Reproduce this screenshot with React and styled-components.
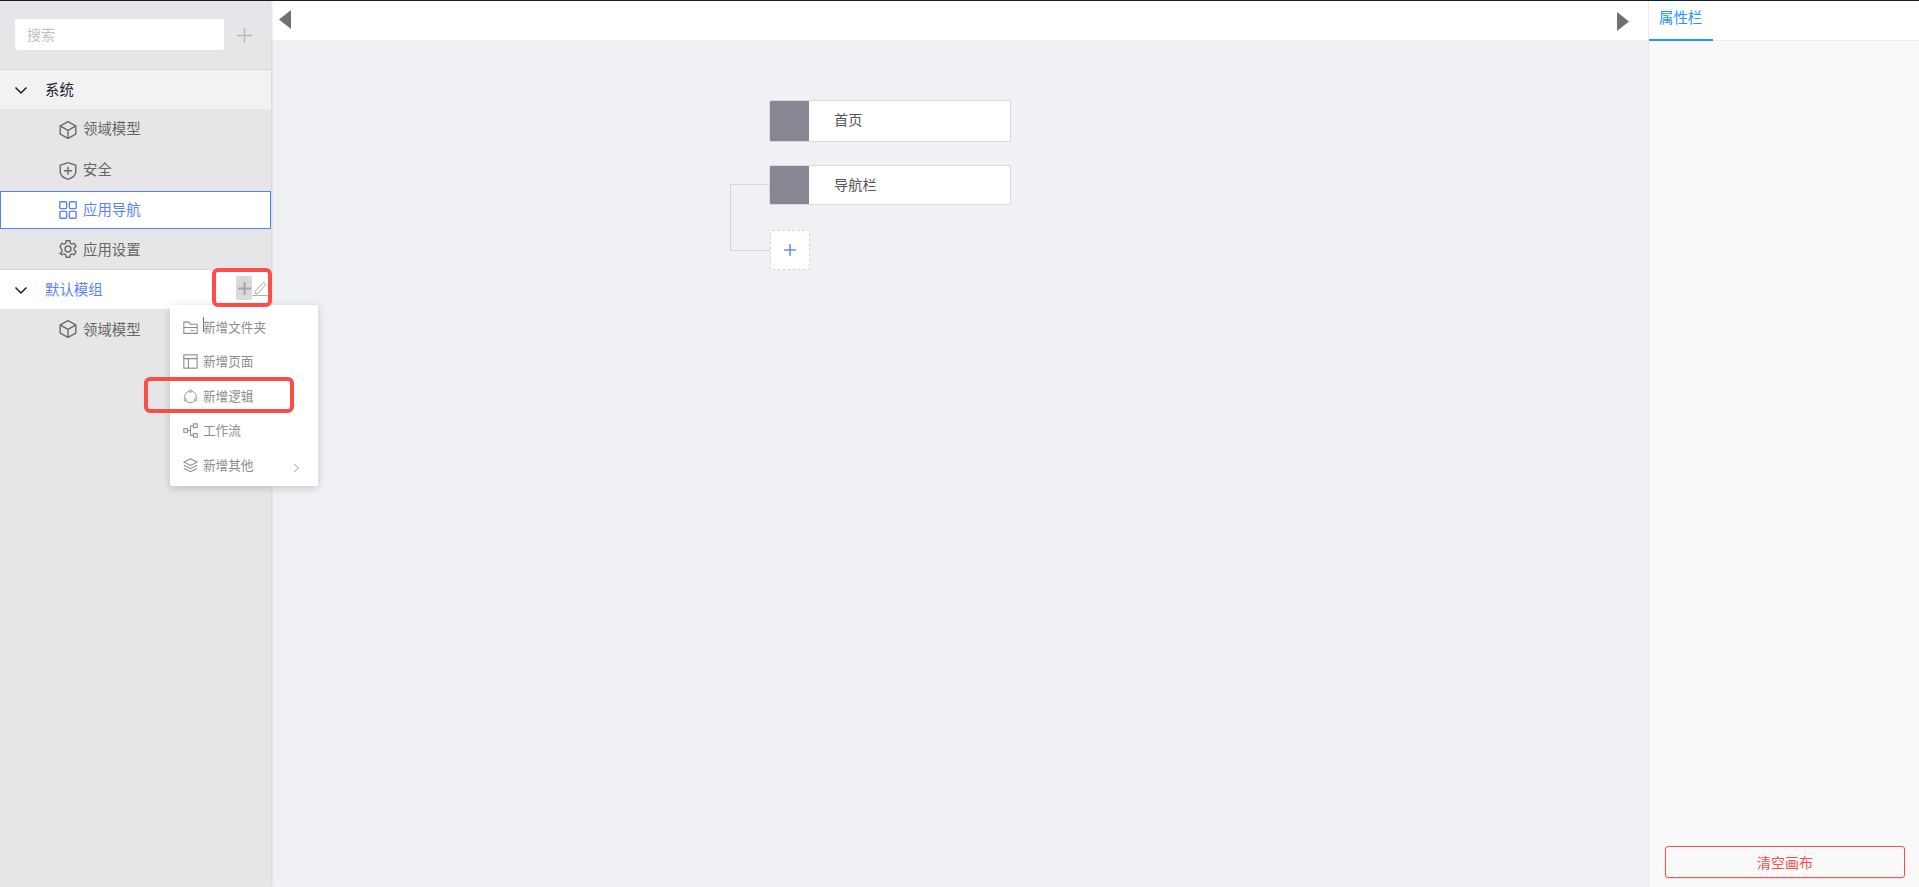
import React from 'react';
import styled, { createGlobalStyle } from 'styled-components';

const GlobalStyle = createGlobalStyle`
  html, body {
    margin: 0;
    padding: 0;
    height: 100%;
    overflow: hidden;
  }
  body {
    font-family: "Noto Sans CJK SC", "Liberation Sans", sans-serif;
    font-size: 14px;
  }
  * {
    box-sizing: border-box;
  }
`;

const Page = styled('div')`
  width: 1919px;
  height: 887px;
  display: flex;
  flex-direction: column;
  position: relative;
  background-color: #f0f1f5;
`;

const TopLine = styled('div')`
  height: 1px;
  flex: none;
  background-color: #0b2136;
`;

const Main = styled('div')`
  flex: 1;
  display: flex;
  min-height: 0;
`;

const Sidebar = styled('div')`
  width: 271px;
  flex: none;
  background-color: #e6e6e8;
  box-shadow: 1px 0 2px rgba(0, 0, 0, 0.12);
  position: relative;
  z-index: 2;
`;

const SearchBar = styled('div')`
  height: 69px;
  padding: 18px 0 0 15px;
  display: flex;
  align-items: flex-start;
  border-bottom: 1px solid #d6d6d8;
`;

const SearchInput = styled('div')`
  width: 209px;
  height: 31px;
  background-color: #fff;
  border-radius: 2px;
  color: #bfbfbf;
  font-size: 14px;
  line-height: 31px;
  padding-left: 12px;
`;

const AddButton = styled('div')`
  margin: 8px 0 0 13px;
  color: #b8b8b8;
`;

const GroupRow = styled('div')`
  height: ${props => (props.$active ? '40px' : '39px')};
  display: flex;
  align-items: center;
  padding-left: 14px;
  position: relative;
  font-size: 14.4px;
  color: ${props => (props.$active ? '#5b7ffb' : '#1f2233')};
  background-color: ${props => (props.$active ? '#fff' : '#f2f2f3')};
  border-top: ${props => (props.$active ? '1px solid #dcdcde' : 'none')};
`;

const GroupLabel = styled('span')`
  margin: 0 0 ${props => props.$lift || 0}px 17px;
`;

const Item = styled('div')`
  height: ${props => props.$height || 40}px;
  display: flex;
  align-items: center;
  padding-left: ${props => (props.$selected ? '58px' : '59px')};
  gap: 6px;
  font-size: 14.4px;
  color: ${props => (props.$selected ? '#5b7ffb' : '#666')};
  background-color: ${props => (props.$selected ? '#fff' : 'transparent')};
  border: ${props => (props.$selected ? '1px solid #5b7ffb' : 'none')};
`;

const ItemLabel = styled('span')`
  margin-bottom: ${props => props.$lift || 0}px;
`;

const RowTools = styled('div')`
  position: absolute;
  left: 236px;
  top: 6px;
  display: flex;
  align-items: center;
`;

const ToolPlus = styled('div')`
  width: 16px;
  height: 24px;
  background-color: #d9d9d9;
  border-radius: 2px;
  color: #a3a3a3;
  display: flex;
  align-items: center;
  justify-content: center;
`;

const Menu = styled('div')`
  position: absolute;
  left: 170px;
  top: 305px;
  width: 148px;
  height: 181px;
  padding: 4px 0 0 13px;
  background-color: #fff;
  border-radius: 2px;
  box-shadow: 0 2px 8px rgba(0, 0, 0, 0.18);
  z-index: 3;
`;

const MenuItem = styled('div')`
  height: 34.5px;
  display: flex;
  align-items: center;
  gap: 5px;
  color: #8c8c8c;
  font-size: 12.6px;
  position: relative;
`;

const MenuIcon = styled('span')`
  display: flex;
  position: relative;
  top: 1px;
`;

const Caret = styled('i')`
  position: absolute;
  left: 20px;
  top: 8px;
  width: 1px;
  height: 15px;
  background-color: #777;
`;

const MoreArrow = styled('svg')`
  position: absolute;
  left: 110px;
  top: 16px;
  color: #a0a0a0;
`;

const RedBox = styled('div')`
  position: absolute;
  left: ${props => props.$x}px;
  top: ${props => props.$y}px;
  width: ${props => props.$w}px;
  height: ${props => props.$h}px;
  border: 4px solid #f94f48;
  border-radius: 6px;
  z-index: 4;
`;

const Center = styled('div')`
  flex: 1;
  display: flex;
  flex-direction: column;
  min-width: 0;
`;

const Toolbar = styled('div')`
  height: 39px;
  flex: none;
  background-color: #fff;
  display: flex;
  align-items: flex-start;
  justify-content: space-between;
  padding: 9px 19px 0 8px;
`;

const Arrow = styled('svg')`
  margin-top: ${props => props.$offset || 0}px;
`;

const Canvas = styled('div')`
  flex: 1;
  position: relative;
`;

const Node = styled('div')`
  position: absolute;
  left: 498px;
  top: ${props => props.$y}px;
  width: 242px;
  height: ${props => props.$h}px;
  display: flex;
  background-color: #fff;
  border: 1px solid #d9d9db;
  border-radius: 2px;
  overflow: hidden;
  color: #555;
  font-size: 14.2px;
`;

const NodeThumb = styled('div')`
  width: 39px;
  background-color: #868793;
  flex: none;
`;

const NodeLabel = styled('div')`
  padding: 0 0 ${props => props.$lift || 0}px 25px;
  display: flex;
  align-items: center;
`;

const AddNode = styled('div')`
  position: absolute;
  left: 499px;
  top: 190px;
  width: 40px;
  height: 40px;
  background-color: #fff;
  border: 1px dashed #d4d4d6;
  border-radius: 2px;
  color: #6a8cff;
  display: flex;
  align-items: center;
  justify-content: center;
`;

const Connector = styled('div')`
  position: absolute;
  left: 459px;
  top: 144px;
  width: 40px;
  height: 67px;
  border: 1px solid #d6d6d8;
  border-right: none;
`;

const Panel = styled('div')`
  width: 271px;
  flex: none;
  background-color: #f9f9fa;
  border-left: 1px solid #ececee;
  display: flex;
  flex-direction: column;
`;

const TabBar = styled('div')`
  height: 40px;
  flex: none;
  background-color: #fff;
  border-bottom: 1px solid #ededef;
`;

const Tab = styled('div')`
  width: 64px;
  height: 40px;
  border-bottom: 2px solid #2395ff;
  color: #2395ff;
  font-size: 14.4px;
  line-height: 32px;
  padding-left: 10px;
`;

const PanelBody = styled('div')`
  flex: 1;
`;

const ClearButton = styled('div')`
  height: 32px;
  margin: 0 14px 9px 16px;
  border: 1px solid #f9504a;
  border-radius: 3px;
  color: #f9504a;
  font-size: 14px;
  line-height: 30px;
  text-align: center;
  box-shadow: 0 1px 2px rgba(0, 0, 0, 0.1);
`;

const Chevron = () => (
  <svg width="14" height="14" viewBox="0 0 14 14" fill="none" stroke="#1f1f1f" strokeWidth="1.5">
    <path d="M1.500 4.500L7 10l5.500-5.500" />
  </svg>
);

const Stroke = ({ size = 18, color = '#6b6b6b', width = 1.400, children }) => (
  <svg width={size} height={size} viewBox="0 0 18 18" fill="none" stroke={color} strokeWidth={width}>
    {children}
  </svg>
);

const CubeIcon = () => (
  <Stroke>
    <path d="M9 .6l7.800 4.400v8L9 17.400 1.200 13V5z" />
    <path d="M1.500 5.200L9 9.400l7.500-4.200M9 9.400v7.800" />
  </Stroke>
);

const ShieldIcon = () => (
  <Stroke>
    <path d="M9 .7l7.800 2.600v6.200c0 3.800-3.800 6.500-7.800 7.800-4-1.300-7.800-4-7.800-7.800V3.300z" />
    <path d="M5 8.800h8M9 4.800v8" />
  </Stroke>
);

const GridIcon = () => (
  <Stroke color="#5b7ffb">
    <rect x=".8" y=".8" width="6.800" height="6.800" rx="1" />
    <rect x="10.400" y=".8" width="6.800" height="6.800" rx="1" />
    <rect x=".8" y="10.400" width="6.800" height="6.800" rx="1" />
    <rect x="10.400" y="10.400" width="6.800" height="6.800" rx="1" />
  </Stroke>
);

const GearIcon = () => (
  <Stroke>
    <circle cx="9" cy="9" r="3" />
    <path d="M7.200.8h3.600l.5 2.400 1.500.9 2.400-.8 1.800 3.100-1.900 1.600v2l1.900 1.600-1.800 3.100-2.400-.8-1.500.9-.5 2.400H7.200l-.5-2.400-1.500-.9-2.400.8L1 13.600 2.900 12v-2L1 6.400l1.800-3.100 2.400.8 1.500-.9z" />
  </Stroke>
);

const FolderIcon = () => (
  <Stroke size={15} color="#8c8c8c" width={1.300}>
    <path d="M1 16V2.500h6l2 2.500h8v11z" />
    <path d="M1 9h16M9.500 12.500h4" />
  </Stroke>
);

const PageIcon = () => (
  <Stroke size={15} color="#8c8c8c" width={1.300}>
    <rect x="1" y="1" width="16" height="16" />
    <path d="M1 5.500h16M6.500 5.500V17" />
  </Stroke>
);

const LogicIcon = () => (
  <Stroke size={15} color="#8c8c8c" width={1.100}>
    <circle cx="9" cy="9.500" r="7" />
    <circle cx="9" cy="2.500" r="1.500" fill="#fff" />
    <circle cx="2.900" cy="13" r="1.500" fill="#fff" />
    <circle cx="15.100" cy="13" r="1.500" fill="#fff" />
  </Stroke>
);

const FlowIcon = () => (
  <Stroke size={15} color="#8c8c8c" width={1.300}>
    <rect x="1" y="6.800" width="4.400" height="4.400" />
    <rect x="12.600" y="1" width="4.400" height="4.400" />
    <rect x="12.600" y="12.600" width="4.400" height="4.400" />
    <path d="M5.400 9H9M9 3.200v11.600M9 3.200h3.600M9 14.800h3.600" />
  </Stroke>
);

const LayersIcon = () => (
  <Stroke size={15} color="#8c8c8c" width={1.300}>
    <path d="M9 1l8 4-8 4-8-4z" />
    <path d="M1 8.800l8 4 8-4M1 12.500l8 4 8-4" />
  </Stroke>
);

const PenIcon = () => (
  <svg width="16" height="16" viewBox="0 0 16 16" fill="none" stroke="#a8a8a8" strokeWidth="1">
    <path d="M3 11.500L11.500 2.500l2.300 2.200L5.500 13.500H3zM.5 15.500h15" />
  </svg>
);

const Plus = ({ size, width = 1.500 }) => (
  <svg width={size} height={size} viewBox="0 0 14 14" stroke="currentColor" strokeWidth={width}>
    <path d="M7 0v14M0 7h14" />
  </svg>
);

const menuItems = [
  { label: '新增文件夹', icon: <FolderIcon />, caret: true },
  { label: '新增页面', icon: <PageIcon /> },
  { label: '新增逻辑', icon: <LogicIcon /> },
  { label: '工作流', icon: <FlowIcon /> },
  { label: '新增其他', icon: <LayersIcon />, more: true },
];

const App = () => (
  <>
    <GlobalStyle />
    <Page>
      <TopLine />
      <Main>
        <Sidebar>
          <SearchBar>
            <SearchInput>搜索</SearchInput>
            <AddButton>
              <Plus size={15} width={1.300} />
            </AddButton>
          </SearchBar>
          <GroupRow>
            <Chevron />
            <GroupLabel $lift={2}>系统</GroupLabel>
          </GroupRow>
          <Item $height={41}><CubeIcon /><ItemLabel $lift={4}>领域模型</ItemLabel></Item>
          <Item $height={41}><ShieldIcon /><ItemLabel $lift={4}>安全</ItemLabel></Item>
          <Item $selected $height={38}><GridIcon /><ItemLabel $lift={3}>应用导航</ItemLabel></Item>
          <Item><GearIcon /><ItemLabel $lift={2}>应用设置</ItemLabel></Item>
          <GroupRow $active>
            <Chevron />
            <GroupLabel $lift={3}>默认模组</GroupLabel>
            <RowTools>
              <ToolPlus><Plus size={13} width={2} /></ToolPlus>
              <PenIcon />
            </RowTools>
          </GroupRow>
          <Item><CubeIcon /><ItemLabel $lift={2}>领域模型</ItemLabel></Item>
        </Sidebar>
        <Center>
          <Toolbar>
            <Arrow width="12" height="19" viewBox="0 0 12 19" fill="#707070"><path d="M12 0v19L0 9.500z" /></Arrow>
            <Arrow $offset={2} width="12" height="19" viewBox="0 0 12 19" fill="#707070"><path d="M0 0v19l12-9.500z" /></Arrow>
          </Toolbar>
          <Canvas>
            <Node $y={60} $h={42}>
              <NodeThumb />
              <NodeLabel $lift={4}>首页</NodeLabel>
            </Node>
            <Node $y={125} $h={40}>
              <NodeThumb />
              <NodeLabel $lift={2}>导航栏</NodeLabel>
            </Node>
            <Connector />
            <AddNode><Plus size={12} width={1.800} /></AddNode>
          </Canvas>
        </Center>
        <Panel>
          <TabBar><Tab>属性栏</Tab></TabBar>
          <PanelBody />
          <ClearButton>清空画布</ClearButton>
        </Panel>
      </Main>
      <Menu>
        {menuItems.map(item => (
          <MenuItem key={item.label}>
            <MenuIcon>{item.icon}</MenuIcon>
            {item.caret && <Caret />}
            {item.label}
            {item.more && (
              <MoreArrow width="7" height="10" viewBox="0 0 7 10" fill="none" stroke="currentColor">
                <path d="M1 1l4.500 4L1 9" />
              </MoreArrow>
            )}
          </MenuItem>
        ))}
      </Menu>
      <RedBox $x={212} $y={268} $w={60} $h={39} />
      <RedBox $x={144} $y={377} $w={150} $h={36} />
    </Page>
  </>
);

export default App;
